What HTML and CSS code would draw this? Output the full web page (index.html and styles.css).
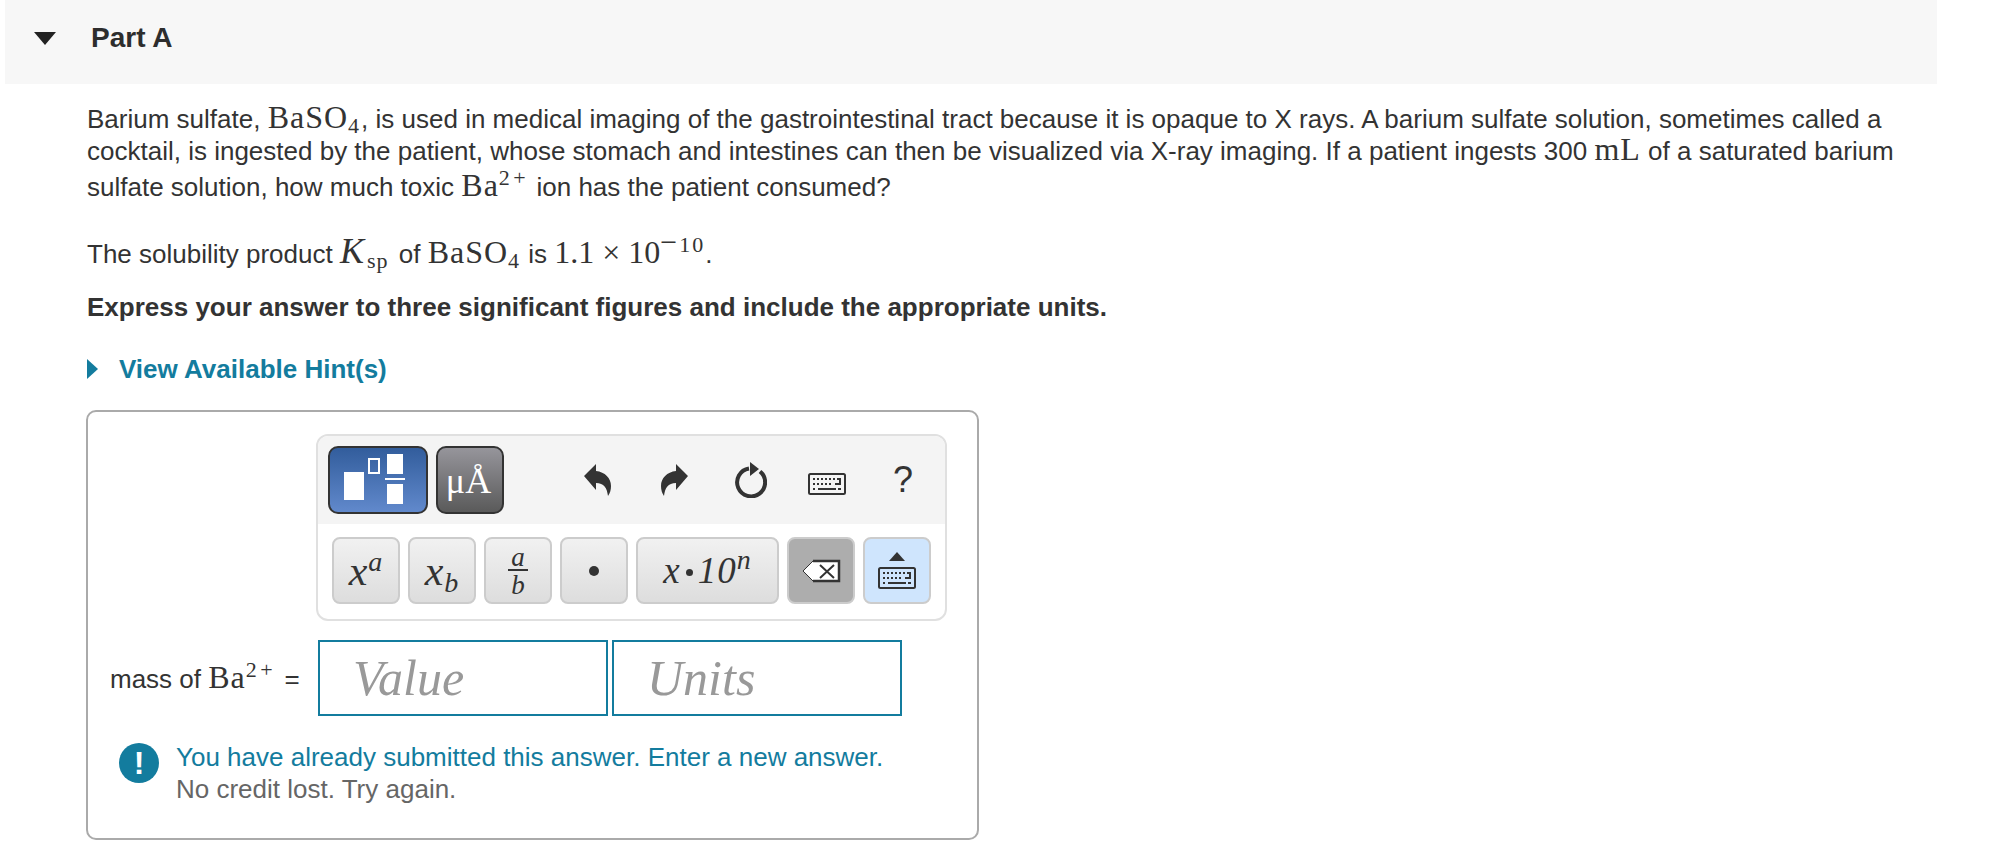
FILE: index.html
```html
<!DOCTYPE html>
<html lang="en">
<head>
    <meta charset="UTF-8">
    <title>Part A</title>
    <link rel="stylesheet" href="styles.css">
</head>
<body>
    <svg class="defs" width="0" height="0">
        <symbol id="keyboard" viewBox="0 0 38 22">
            <rect x="1" y="1" width="36" height="20" rx="1.5" fill="none" stroke="currentColor" stroke-width="2"/>
            <path d="M5 5h2v2H5zM9 5h2v2H9zM13 5h2v2h-2zM17 5h2v2h-2zM21 5h2v2h-2zM25 5h2v2h-2zM29 5h4v7h-6v-2h4V7h-2zM5 10h2v2H5zM9 10h2v2H9zM13 10h2v2h-2zM17 10h2v2h-2zM21 10h2v2h-2zM5 15h2v2H5zM10 15h18v2H10zM30 15h3v2h-3z" fill="currentColor"/>
        </symbol>
    </svg>

    <div class="part-header">
        <span class="caret-down"></span>
        <h2>Part A</h2>
    </div>

    <div class="part-body">
        <p class="intro">Barium sulfate, <span class="m">BaSO<sub>4</sub></span>, is used in medical imaging of the gastrointestinal tract because it is opaque to X rays. A barium sulfate solution, sometimes called a cocktail, is ingested by the patient, whose stomach and intestines can then be visualized via X-ray imaging. If a patient ingests 300 <span class="m">mL</span> of a saturated barium sulfate solution, how much toxic <span class="m">Ba<sup>2+</sup></span> ion has the patient consumed?</p>
        <p class="ksp">The solubility product <span class="m"><i class="ksp-k">K</i><sub class="ksp-sub">sp</sub></span> of <span class="m">BaSO<sub>4</sub></span> is <span class="m num">1.1 × 10<sup class="exp"><span class="minus">−</span>10</sup></span>.</p>
        <p class="express">Express your answer to three significant figures and include the appropriate units.</p>
        <div class="hint"><span class="caret-right"></span>View Available Hint(s)</div>

        <div class="answer-panel">
            <div class="toolbar">
                <div class="toolbar-top">
                    <div class="mode mode-blue">
                        <svg width="96" height="64" viewBox="0 0 96 64">
                            <rect x="14" y="24" width="20" height="28" fill="#fff"/>
                            <rect x="39" y="11" width="10" height="14" fill="none" stroke="#fff" stroke-width="2"/>
                            <rect x="57" y="6" width="16" height="20" fill="#fff"/>
                            <rect x="55" y="30" width="20" height="2" fill="#fff"/>
                            <rect x="57" y="36" width="16" height="20" fill="#fff"/>
                        </svg>
                    </div>
                    <div class="mode mode-gray">μÅ</div>
                    <div class="tools">
                        <svg class="tool" width="27" height="32" viewBox="0 0 27 32"><path d="M0 12 12 0v7c9 1 15 7 15 15 0 4-1 7-3 10-1-8-4-13-12-13v7z" fill="#333"/></svg>
                        <svg class="tool" width="27" height="32" viewBox="0 0 27 32"><path d="M27 12 15 0v7C6 8 0 14 0 22c0 4 1 7 3 10 1-8 4-13 12-13v7z" fill="#333"/></svg>
                        <svg class="tool" width="32" height="36" viewBox="0 0 32 36"><path d="M25 9.500a14 14 0 1 1-11-3" fill="none" stroke="#333" stroke-width="4"/><path d="M15 0l9 7-9 7z" fill="#333"/></svg>
                        <svg class="tool kb" width="38" height="22"><use href="#keyboard"/></svg>
                        <span class="help">?</span>
                    </div>
                </div>
                <div class="toolbar-bottom">
                    <div class="key"><span class="tpl big">x<sup>a</sup></span></div>
                    <div class="key"><span class="tpl big">x<sub>b</sub></span></div>
                    <div class="key"><span class="frac"><span>a</span><span>b</span></span></div>
                    <div class="key"><span class="dot"></span></div>
                    <div class="key key-wide"><span class="tpl">x<b class="mid"></b>10<sup>n</sup></span></div>
                    <div class="key key-back">
                        <svg width="40" height="24" viewBox="0 0 40 24"><path d="M38 2H12L2 12l10 10h26z" fill="#fff"/><path d="M12 2 2 12l10 10" fill="none" stroke="#333" stroke-width="1"/><path d="M12 2h26v20H12" fill="none" stroke="#333" stroke-width="2.500"/><path d="M19 6l14 13M33 6 19 19" stroke="#333" stroke-width="2" fill="none"/></svg>
                    </div>
                    <div class="key key-kb">
                        <span class="caret-up"></span>
                        <svg width="38" height="22"><use href="#keyboard"/></svg>
                    </div>
                </div>
            </div>

            <div class="answer-row">
                <label class="answer-label">mass of <span class="m">Ba<sup>2+</sup></span> <span class="eq">=</span></label>
                <input class="answer-input" type="text" placeholder="Value">
                <input class="answer-input" type="text" placeholder="Units">
            </div>

            <div class="feedback">
                <span class="alert-icon">!</span>
                <div>
                    <div class="feedback-main">You have already submitted this answer. Enter a new answer.</div>
                    <div class="feedback-sub">No credit lost. Try again.</div>
                </div>
            </div>
        </div>
    </div>
</body>
</html>
```

FILE: styles.css
```css
body {
    margin: 0;
    background-color: #fff;
    font-family: "Liberation Sans", Arial, sans-serif;
    font-size: 26px;
    color: #333;
}

.defs {
    display: block;
    height: 0;
}

/* header strip */
.part-header {
    display: flex;
    align-items: center;
    width: 1932px;
    height: 84px;
    margin-left: 5px;
    background-color: #f7f7f7;
}
.part-header h2 {
    margin: 0 0 8px 35px;
    font-size: 28px;
    font-weight: bold;
    color: #2d2d2d;
}
.caret-down {
    width: 0;
    height: 0;
    margin: 0 0 8px 29px;
    border-left: 11px solid transparent;
    border-right: 11px solid transparent;
    border-top: 13px solid #222;
}

.part-body {
    padding: 19px 0 0 87px;
    width: 1830px;
}
.part-body p {
    margin: 0;
}
.intro {
    line-height: 32px;
}
.ksp {
    margin-top: 31px !important;
    line-height: 32px;
}
.express {
    margin-top: 21px !important;
    font-weight: bold;
    line-height: 32px;
}

/* math bits */
.m {
    font-family: "Liberation Serif", "Times New Roman", serif;
    font-size: 32px;
    line-height: 0;
    letter-spacing: 1px;
}
.m.num {
    letter-spacing: 0;
}
.m sub {
    font-size: 22px;
    line-height: 0;
    letter-spacing: 2px;
    vertical-align: -5px;
}
.m sup {
    font-size: 22px;
    line-height: 1;
    letter-spacing: 3.5px;
    vertical-align: 11px;
}
.m sup.exp {
    letter-spacing: 2px;
}
.minus {
    font-size: 30px;
    line-height: 0;
}
.ksp-k {
    font-size: 36px;
}
.m .ksp-sub {
    margin: 0 3px 0 2px;
    letter-spacing: 1px;
}

.hint {
    display: flex;
    align-items: center;
    margin-top: 30px;
    font-weight: bold;
    line-height: 32px;
    color: #137c9e;
}
.caret-right {
    width: 0;
    height: 0;
    margin-right: 21px;
    border-top: 10px solid transparent;
    border-bottom: 10px solid transparent;
    border-left: 11px solid #137c9e;
}

/* answer box */
.answer-panel {
    box-sizing: border-box;
    width: 893px;
    height: 430px;
    margin: 25px 0 0 -1px;
    padding: 22px 0 0 22px;
    border: 2px solid #aaa;
    border-radius: 10px;
}
.toolbar {
    box-sizing: border-box;
    width: 631px;
    height: 187px;
    margin-left: 206px;
    border: 2px solid #e0e0e0;
    border-radius: 12px;
    overflow: hidden;
}
.toolbar-top {
    display: flex;
    align-items: center;
    height: 88px;
    padding-left: 10px;
    background-color: #f4f4f4;
}
.mode {
    box-sizing: border-box;
    display: flex;
    align-items: center;
    justify-content: center;
    height: 68px;
    border: 2px solid #333;
    border-radius: 10px;
    color: #fff;
}
.mode-blue {
    width: 100px;
    background: linear-gradient(#325d9c, #6189cc);
}
.mode-gray {
    width: 68px;
    margin-left: 8px;
    padding: 2px 3px 0 0;
    background: linear-gradient(#96959b, #5a5a5a);
    font-family: "Liberation Serif", serif;
    font-size: 36px;
}
.tools {
    display: flex;
    align-items: center;
    margin-left: 80px;
}
.tools .tool:nth-child(2) {
    margin-left: 50px;
}
.tools .tool:nth-child(3) {
    margin-left: 47px;
}
.tools .kb {
    margin: 8px 0 0 41px;
    color: #333;
}
.help {
    margin-left: 47px;
    font-size: 36px;
    color: #333;
}

.toolbar-bottom {
    display: flex;
    gap: 8px;
    padding: 13px 0 0 14px;
}
.key {
    box-sizing: border-box;
    display: flex;
    align-items: center;
    justify-content: center;
    width: 68px;
    height: 67px;
    border: 2px solid #ccc;
    border-radius: 8px;
    background: linear-gradient(#f1f1f1, #ddd);
    color: #333;
}
.key-wide {
    width: 143px;
}
.key-back {
    background: #adadad;
}
.key-kb {
    flex-direction: column;
    gap: 6px;
    background: #cfe5fd;
    color: #333;
}
.tpl {
    font-family: "Liberation Serif", serif;
    font-style: italic;
    font-size: 37px;
    letter-spacing: 1px;
}
.tpl.big {
    font-size: 42px;
    line-height: 1;
}
.tpl sup,
.tpl sub {
    font-size: 28px;
    line-height: 0;
}
.tpl sup {
    vertical-align: 14px;
}
.tpl sub {
    vertical-align: -7px;
}
.mid {
    display: inline-block;
    width: 7px;
    height: 7px;
    margin: 0 5px;
    border-radius: 50%;
    background-color: #333;
    vertical-align: 7px;
}
.frac {
    display: flex;
    flex-direction: column;
    align-items: center;
    width: 20px;
    font-family: "Liberation Serif", serif;
    font-style: italic;
    font-size: 27px;
    line-height: 24px;
}
.frac span:first-child {
    width: 100%;
    text-align: center;
    border-bottom: 2px solid #333;
    margin-bottom: 2px;
}
.dot {
    width: 10px;
    height: 10px;
    border-radius: 50%;
    background-color: #333;
}
.caret-up {
    width: 0;
    height: 0;
    border-left: 8px solid transparent;
    border-right: 8px solid transparent;
    border-bottom: 9px solid #333;
}

.answer-row {
    display: flex;
    align-items: center;
    margin-top: 19px;
}
.answer-label {
    width: 208px;
    padding-bottom: 2px;
    white-space: nowrap;
}
.eq {
    margin-left: 1px;
}
.answer-input {
    box-sizing: border-box;
    width: 290px;
    height: 76px;
    margin-right: 4px;
    padding: 0 0 0 33px;
    border: 2px solid #137c9e;
    border-radius: 0;
    outline: none;
    font-family: "Liberation Serif", serif;
    font-style: italic;
    font-size: 50px;
}
.answer-input::placeholder {
    color: #999;
    opacity: 1;
}

.feedback {
    display: flex;
    margin: 25px 0 0 9px;
    line-height: 32px;
}
.alert-icon {
    flex: none;
    width: 40px;
    height: 40px;
    margin: 2px 17px 0 0;
    border-radius: 50%;
    background-color: #137c9e;
    color: #fff;
    font-weight: bold;
    font-size: 32px;
    line-height: 40px;
    text-align: center;
}
.feedback-main {
    color: #137c9e;
}
.feedback-sub {
    color: #666;
}
```
